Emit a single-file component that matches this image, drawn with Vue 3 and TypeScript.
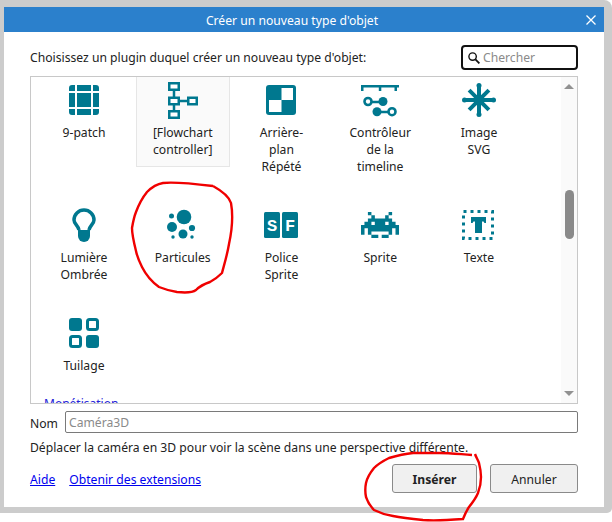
<script setup lang="ts">
const items = [
  { icon: 'patch', label: '9-patch' },
  { icon: 'flow', label: '[Flowchart controller]', selected: true },
  { icon: 'checker', label: 'Arrière-plan Répété' },
  { icon: 'timeline', label: 'Contrôleur de la timeline' },
  { icon: 'star', label: 'Image SVG' },
  { icon: 'bulb', label: 'Lumière Ombrée' },
  { icon: 'particles', label: 'Particules' },
  { icon: 'sf', label: 'Police Sprite' },
  { icon: 'sprite', label: 'Sprite' },
  { icon: 'text', label: 'Texte' },
  { icon: 'tiles', label: 'Tuilage' },
]
const invader = [
  '..X.....X..',
  '...X...X...',
  '..XXXXXXX..',
  '.XX.XXX.XX.',
  'XXXXXXXXXXX',
  'X.XXXXXXX.X',
  'X.X.....X.X',
  '...XX.XX...',
]
const invaderPath = invader
  .map((row, y) =>
    [...row]
      .map((c, x) => (c === 'X' ? `M${x} ${y}h1.02v1.02h-1.02z` : ''))
      .join(''),
  )
  .join('')
const starArms = [0, 45, 90, 135]
</script>

<template>
  <div class="page">
    <div class="backdrop">
      <div class="window">
        <header class="titlebar">
          <span class="title">Créer un nouveau type d'objet</span>
          <svg class="close" width="10" height="10" viewBox="0 0 10 10">
            <path d="M.5.5l9 9M9.5.5l-9 9" stroke="#fff" stroke-width="1.3" fill="none" />
          </svg>
        </header>
        <main class="content">
          <div class="prompt-row">
            <span>Choisissez un plugin duquel créer un nouveau type d'objet:</span>
            <label class="search">
              <svg width="12" height="12" viewBox="0 0 12 12">
                <circle cx="4.6" cy="4.6" r="3.7" fill="none" stroke="#111" stroke-width="1.4" />
                <path d="M7.4 7.4l4 4" stroke="#111" stroke-width="1.8" />
              </svg>
              <span class="search-ph">Chercher</span>
            </label>
          </div>

          <section class="list">
            <div class="grid">
              <div v-for="item in items" :key="item.icon" class="cell" :class="{ selected: item.selected }">
                <svg class="icon" width="30" height="30" viewBox="0 0 30 30">
                  <g v-if="item.icon === 'patch'">
                    <path d="M3 0h3v6H0V3a3 3 0 0 1 3-3zM8 0h14v6H8zM24 0h3a3 3 0 0 1 3 3v3h-6zM0 8h6v14H0zM8 8h14v14H8zM24 8h6v14h-6zM0 24h6v6H3a3 3 0 0 1-3-3zM8 24h14v6H8zM24 24h6v3a3 3 0 0 1-3 3h-3z" />
                  </g>
                  <g v-else-if="item.icon === 'flow'">
                    <path d="M6 5v20M12 16h8" class="line" stroke-width="2.500" />
                    <rect x="1.250" y="-1.750" width="9.500" height="6.500" class="box" />
                    <rect x="1.250" y="12.750" width="9.500" height="6.500" class="box" />
                    <rect x="20.250" y="12.750" width="8.500" height="6.500" class="box" />
                    <rect x="1.250" y="26.250" width="9.500" height="6.500" class="box" />
                  </g>
                  <g v-else-if="item.icon === 'checker'">
                    <rect width="30" height="30" rx="3" />
                    <rect x="15.500" y="3" width="11.500" height="12" fill="#fff" />
                    <rect x="3" y="15" width="12.500" height="12" fill="#fff" />
                  </g>
                  <g v-else-if="item.icon === 'timeline'">
                    <path d="M-4 0h38v2.500h-2v3.500h-2.500v-3.500H16.300v3.500h-2.500v-3.500H-1.500v3.500H-4z" />
                    <path d="M3 17h15M12 27h15" class="line" stroke-width="2.500" />
                    <circle cx="3" cy="16.500" r="3.500" fill="#fff" stroke="#00788f" stroke-width="2.600" />
                    <circle cx="18" cy="16.500" r="4.500" />
                    <circle cx="12" cy="26.700" r="4.500" />
                    <circle cx="27" cy="26.700" r="3.500" fill="#fff" stroke="#00788f" stroke-width="2.600" />
                  </g>
                  <g v-else-if="item.icon === 'star'">
                    <g v-for="a in starArms" :key="a" :transform="`rotate(${a} 15 15)`">
                      <path d="M15 1V29" class="line" stroke-width="4" />
                      <circle v-if="a % 90 === 0" cx="15" cy="0.500" r="2.500" />
                      <circle v-if="a % 90 === 0" cx="15" cy="29.500" r="2.500" />
                    </g>
                    <circle cx="15" cy="15" r="5.500" />
                  </g>
                  <g v-else-if="item.icon === 'bulb'">
                    <path d="M10 20C9.500 16 5 14 5 10a10 10 0 0 1 20 0C25 14 20.500 16 20 20" fill="#fff" stroke="#00788f" stroke-width="3.500" />
                    <path d="M9 20h12v6a6 6 0 0 1-12 0z" />
                  </g>
                  <g v-else-if="item.icon === 'particles'">
                    <circle cx="16" cy="7" r="7.300" />
                    <circle cx="3.500" cy="6" r="2.500" />
                    <circle cx="4" cy="17" r="5" />
                    <circle cx="24" cy="18" r="3.100" />
                    <circle cx="15" cy="24" r="4.500" />
                    <circle cx="5" cy="27" r="1.700" />
                    <circle cx="24" cy="27" r="1.700" />
                  </g>
                  <g v-else-if="item.icon === 'sf'">
                    <rect x="-2" y="2" width="16" height="26" rx="1.500" />
                    <rect x="16" y="2" width="16" height="26" rx="1.500" />
                    <text x="6" y="20.500" class="sf-letter">S</text>
                    <text x="24" y="20.500" class="sf-letter">F</text>
                  </g>
                  <g v-else-if="item.icon === 'sprite'">
                    <path :d="invaderPath" transform="translate(-4 2) scale(3.450 3.250)" />
                  </g>
                  <g v-else-if="item.icon === 'text'">
                    <rect x="-0.500" y="1.500" width="29" height="27" fill="none" stroke="#00788f" stroke-width="3" stroke-dasharray="3 4" />
                    <path d="M7 7h15v6h-1.500l-1-1.500H18V23h-7V11.500H9.500l-1 1.500H7z" />
                  </g>
                  <g v-else-if="item.icon === 'tiles'">
                    <rect width="13" height="13" rx="3" />
                    <rect x="18.500" y="1.500" width="10" height="10" rx="2" fill="#fff" stroke="#00788f" stroke-width="3" />
                    <rect x="1.500" y="18.500" width="10" height="10" rx="2" fill="#fff" stroke="#00788f" stroke-width="3" />
                    <rect x="17" y="17" width="13" height="13" rx="3" />
                  </g>
                </svg>
                <div class="label">{{ item.label }}</div>
              </div>
            </div>
            <h3 class="group"><span>Monétisation</span><i></i></h3>
            <div class="scrollbar" aria-hidden="true">
              <b class="arrow up"></b>
              <b class="thumb"></b>
              <b class="arrow down"></b>
            </div>
          </section>

          <div class="name-row">
            <span class="name-label">Nom</span>
            <div class="name-input">Caméra3D</div>
          </div>
          <p class="desc">Déplacer la caméra en 3D pour voir la scène dans une perspective différente.</p>
          <footer class="footer">
            <a href="#" class="link">Aide</a>
            <a href="#" class="link extensions">Obtenir des extensions</a>
            <span class="spacer"></span>
            <button class="btn primary">Insérer</button>
            <button class="btn">Annuler</button>
          </footer>
        </main>
      </div>
    </div>

    <svg class="ink" width="612" height="522" viewBox="0 0 612 522" aria-hidden="true">
      <path d="M213 186C222 191 229 196 231 203C233 214 232 230 229 244C227 256 224 265 222 273C218 277 214 280 210 282C204 284 200 286 196 290C192 293 186 293 177 292C170 291 164 289 159 287C152 282 146 275 142 267C139 261 137 256 136 251C134 243 132 235 132 228C133 222 134 217 136 212C139 204 143 197 147 192C152 187 157 184 163 183C172 182 188 183 213 186" />
      <path d="M472 455C458 454 450 453 439 453C430 453 420 453 413 453C404 454 396 456 389 458C383 461 378 464 374 468C370 473 367 478 366 483C365 488 365 492 366 497C368 503 371 507 374 510C380 513 386 515 393 516C403 518 413 519 423 520C436 521 450 520 463 519C465 514 467 510 469 507C473 502 476 498 478 493C480 488 481 483 481 477C481 472 480 467 479 463C478 460 476 457 475 454" />
    </svg>
  </div>
</template>

<style scoped>
.page {
  position: relative;
  width: 612px;
  height: 522px;
  background: #fff;
  font-family: "Noto Sans", "Open Sans", sans-serif;
  font-size: 12.17px;
  line-height: 17px;
  color: #222;
}
.backdrop {
  box-sizing: border-box;
  height: 513px;
  padding: 7px 8px 6px 4px;
  background: #cccccc;
  border-radius: 0 8px 5px 0;
}
.window {
  display: flex;
  flex-direction: column;
  height: 500px;
  background: #fff;
}
.titlebar {
  position: relative;
  display: flex;
  flex: none;
  align-items: center;
  justify-content: center;
  box-sizing: border-box;
  height: 25px;
  padding: 1px 24px 0 0;
  background: #2b80cc;
  color: #fff;
}
.close {
  position: absolute;
  right: 8px;
  top: 8px;
}
.content {
  display: flex;
  flex: 1;
  flex-direction: column;
  padding: 13px 26px 0;
}
.prompt-row {
  display: flex;
  align-items: center;
  justify-content: space-between;
  height: 25px;
}
.search {
  display: flex;
  align-items: center;
  gap: 3px;
  box-sizing: border-box;
  width: 117px;
  height: 25px;
  padding: 0 5px;
  border: 2px solid #111;
  border-radius: 4px;
}
.search-ph {
  color: #8a8a8a;
}
.list {
  position: relative;
  flex: none;
  box-sizing: border-box;
  height: 328px;
  margin-top: 6px;
  border: 1px solid #c8c8c8;
  overflow: hidden;
}
.grid {
  display: grid;
  grid-template-columns: repeat(5, 98.75px);
  grid-template-rows: 125px 108px 85px;
  padding-left: 3.6px;
}
.cell {
  box-sizing: border-box;
  justify-self: center;
  width: 94px;
  height: 90px;
  padding-top: 8px;
  border: 1px solid transparent;
  border-top: 0;
  text-align: center;
}
.selected {
  background: #fafafa;
  border-color: #e6e6e6;
}
.icon {
  display: block;
  margin: 0 auto;
  overflow: visible;
  fill: #00788f;
}
.line {
  fill: none;
  stroke: #00788f;
}
.box {
  fill: #fff;
  stroke: #00788f;
  stroke-width: 2.5;
}
.sf-letter {
  fill: #fff;
  font: 700 17px "Liberation Mono", monospace;
  text-anchor: middle;
}
.label {
  width: 62px;
  margin: 9px auto 0;
}
.group {
  display: flex;
  align-items: center;
  gap: 5px;
  margin: 0 29px 0 13px;
  font-size: 12px;
  font-weight: 400;
  line-height: 17px;
  color: #2323d8;
}
.group i {
  flex: 1;
  height: 1px;
  background: #c8c8f0;
}
.scrollbar {
  position: absolute;
  top: 0;
  right: 0;
  bottom: 0;
  display: flex;
  flex-direction: column;
  align-items: center;
  width: 16px;
  background: #fafafa;
}
.scrollbar b {
  position: absolute;
  display: block;
}
.thumb {
  top: 113px;
  width: 9px;
  height: 49px;
  border-radius: 5px;
  background: #8a8a8a;
}
.arrow {
  width: 0;
  height: 0;
  border-right: 5px solid transparent;
  border-left: 5px solid transparent;
}
.up {
  top: 7px;
  border-bottom: 5px solid #919191;
}
.down {
  bottom: 7px;
  border-top: 5px solid #919191;
}
.name-row {
  display: flex;
  align-items: center;
  gap: 7px;
  margin-top: 7px;
}
.name-label {
  padding-top: 2px;
}
.name-input {
  flex: 1;
  box-sizing: border-box;
  height: 22px;
  padding: 2px 3px;
  border: 1px solid #7a7a7a;
  border-radius: 2px;
  color: #8a8a8a;
}
.desc {
  margin: 6px 0 0;
}
.footer {
  display: flex;
  align-items: center;
  gap: 13px;
  margin-top: 8px;
}
.spacer {
  flex: 1;
}
.link {
  padding-top: 2px;
  color: #0000ee;
  text-decoration: underline;
}
.extensions {
  margin-left: 1px;
}
.btn {
  box-sizing: border-box;
  width: 85px;
  height: 29px;
  padding: 1px 0 0;
  border: 1px solid #8a8a8a;
  border-radius: 3px;
  background: #f0f0f0;
  color: #222;
  font: inherit;
}
.btn + .btn {
  width: 88px;
}
.primary {
  font-weight: 700;
}
.ink {
  position: absolute;
  top: 0;
  left: 0;
  fill: none;
  stroke: #f00000;
  stroke-width: 2.4;
  pointer-events: none;
}
</style>

<style>
html,
body {
  background: #fff;
}
</style>
